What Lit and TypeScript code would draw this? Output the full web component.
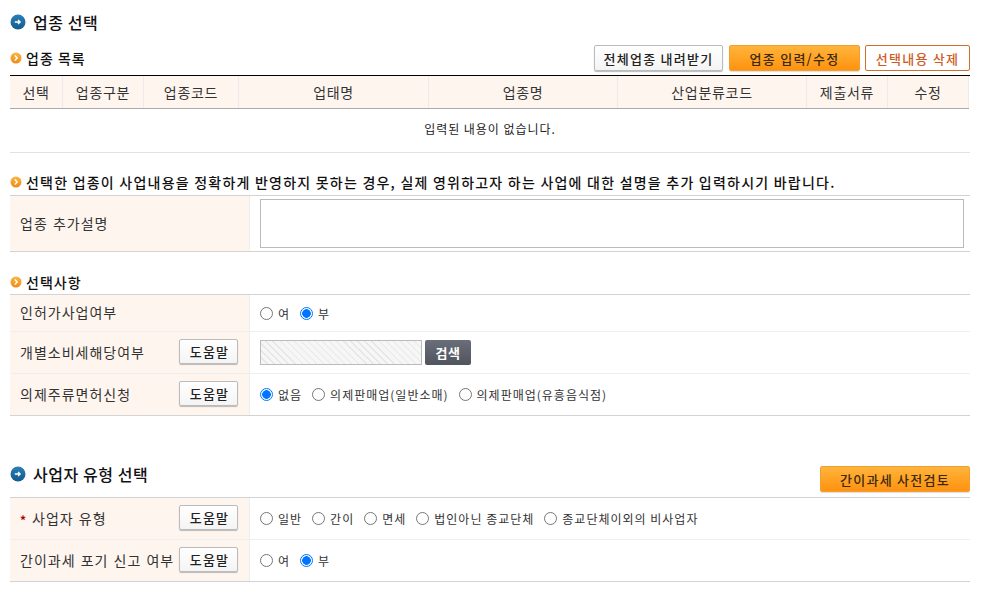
import { LitElement, html, css } from "lit";
import { customElement } from "lit/decorators.js";

const blueIcon = html`<svg class="ic16" viewBox="0 0 16 16"><defs><linearGradient id="bg" x1="0" y1="0" x2="0" y2="1"><stop offset="0" stop-color="#2a7fb8"/><stop offset="1" stop-color="#125a8e"/></linearGradient></defs><circle cx="8" cy="8" r="7.5" fill="url(#bg)"/><path d="M4.8 8h5.2M8 5.9 10.2 8 8 10.1" fill="none" stroke="#fff" stroke-width="1.3"/></svg>`;
const orangeIcon = html`<svg class="ic12" viewBox="0 0 12 12"><defs><linearGradient id="og" x1="0" y1="0" x2="0" y2="1"><stop offset="0" stop-color="#fbb545"/><stop offset="1" stop-color="#ef8a16"/></linearGradient></defs><circle cx="6" cy="6" r="5.5" fill="url(#og)"/><path d="M4.8 3.6 7.2 6 4.8 8.4" fill="none" stroke="#fff" stroke-width="1.4"/></svg>`;

const radio = (label: string, on = false) => html`<span class="radio"><span class="dot ${on ? "on" : ""}"></span><span>${label}</span></span>`;

@customElement("app-root")
export class AppRoot extends LitElement {
  static styles = css`
    :host { display: block; font-family: "Noto Sans CJK KR", "Noto Sans", sans-serif; color: #333; background: #fff; height: 600px; overflow: hidden; }
    .page { padding: 0 12px 0 10px; }
    .ic16 { width: 16px; height: 16px; flex: none; }
    .ic12 { width: 12px; height: 12px; flex: none; }
    .h1 { display: flex; align-items: center; gap: 7px; font-size: 16px; font-weight: 500; color: #111; letter-spacing: 0.55px; height: 22px; }
    .h2 { display: flex; align-items: center; gap: 4px; font-size: 14px; font-weight: 500; color: #111; letter-spacing: 1px; height: 20px; }
    .top { margin-top: 11px; }
    .bar { display: flex; align-items: center; justify-content: space-between; }
    .bar1 { margin-top: 12px; }
    .btns { display: flex; gap: 5px; }
    .btn { box-sizing: border-box; height: 26px; display: flex; align-items: center; justify-content: center; font-size: 13px; font-weight: 500; letter-spacing: 1.25px; border-radius: 2px; white-space: nowrap; }
    .white { border: 1px solid #bbb; background: linear-gradient(#fff, #f4f4f4); color: #222; box-shadow: 0 1px 1px #bbb; }
    .orange { border: 1px solid #f0a030; background: linear-gradient(#ffb43c, #ff920f); color: #3a2a10; box-shadow: 0 1px 1px #ddd; }
    .outline { border: 1px solid #d0702c; background: #fff; color: #cf5c22; }
    .w129 { width: 129px; margin-right: 1px; } .w131 { width: 131px; } .w105 { width: 105px; } .w150 { width: 150px; }
    .help { width: 59px; height: 25px; flex: none; padding-left: 2px; margin-bottom: 2px; }

    .list { margin-top: 4px; border-top: 1px solid #000; }
    .thead { display: grid; grid-template-columns: 53px 81px 95px 190px 189px 189px 81px 81px; height: 32px; border-bottom: 1px solid #aaa; box-sizing: content-box; background: #fff5ef; width: 959px; }
    .th { display: flex; align-items: center; justify-content: center; font-size: 14px; letter-spacing: 0.7px; color: #333; border-right: 1px solid #eceaea; }
    .empty { border-bottom: 1px solid #e2e2e2; display: flex; align-items: center; justify-content: center; padding-bottom: 5px; box-sizing: content-box; height: 38px; font-size: 12px; letter-spacing: 0.95px; color: #222; }

    .note { margin-top: 19px; letter-spacing: 1.22px; }
    .tbl { border-top: 1px solid #d3d3d3; border-bottom: 1px solid #d3d3d3; }
    .row { display: grid; grid-template-columns: 240px 1fr; }
    .row + .row { border-top: 1px solid #eee; }
    .lab { background: #fff5ef; border-right: 1px solid #eee; box-sizing: border-box; padding: 0 11px 0 10px; display: flex; align-items: center; justify-content: space-between; font-size: 14px; letter-spacing: 1px; word-spacing: 1px; color: #333; white-space: nowrap; }
    .val { display: flex; align-items: center; padding-left: 10px; gap: 10px; font-size: 12px; letter-spacing: 1px; color: #333; }
    .r36 { height: 36px; } .r41 { height: 41px; } .r56 { height: 55px; }
    .txa { box-sizing: border-box; width: 704px; height: 49px; border: 1px solid #bbb; background: #fff; }
    .radio { display: inline-flex; align-items: center; gap: 5px; }
    .dot { box-sizing: border-box; width: 13px; height: 13px; border-radius: 50%; border: 1px solid #767676; background: #fff; display: block; }
    .dot.on { border: 1.5px solid #0075ff; background: radial-gradient(circle, #0075ff 0 4px, #fff 4.6px); }
    .dis { box-sizing: border-box; width: 162px; height: 25px; border: 1px solid #bbb; background: repeating-linear-gradient(45deg, #f6f6f6 0 4px, #e6e6e6 4px 5px); }
    .search { width: 46px; height: 25px; box-sizing: border-box; border-radius: 2px; background: linear-gradient(#6a6e78, #50545e); color: #fff; font-size: 13px; font-weight: 700; letter-spacing: 0.5px; display: flex; align-items: center; justify-content: center; margin-left: -7px; }
    .star { position: relative; top: 2px; color: #b00000; font-weight: 700; margin-right: 6px; font-size: 12px; letter-spacing: 0; }
    .lab-l { display: flex; align-items: center; margin-bottom: 2px; }
    .h2gap { margin-top: 20px; }
    .sec2 { margin-top: 47px; height: 29px; }
    .sec2 .h1 { align-self: flex-start; }
    .sec2 .btn { align-self: flex-end; }
    .t2 { margin-top: 5px; }
    .t-opt { margin-top: 2px; }
    .t-note { margin-top: 3px; }
  `;

  render() {
    const heads = ["선택", "업종구분", "업종코드", "업태명", "업종명", "산업분류코드", "제출서류", "수정"];
    return html`<div class="page">
      <div class="h1 top">${blueIcon}<span>업종 선택</span></div>
      <div class="bar bar1">
        <div class="h2">${orangeIcon}<span>업종 목록</span></div>
        <div class="btns">
          <div class="btn white w129">전체업종 내려받기</div>
          <div class="btn orange w131">업종 입력/수정</div>
          <div class="btn outline w105">선택내용 삭제</div>
        </div>
      </div>
      <div class="list">
        <div class="thead">${heads.map((h) => html`<div class="th">${h}</div>`)}</div>
        <div class="empty"><span>입력된 내용이 없습니다.</span></div>
      </div>

      <div class="h2 note">${orangeIcon}<span>선택한 업종이 사업내용을 정확하게 반영하지 못하는 경우, 실제 영위하고자 하는 사업에 대한 설명을 추가 입력하시기 바랍니다.</span></div>
      <div class="tbl t-note">
        <div class="row r56"><div class="lab"><span class="lab-l">업종 추가설명</span></div><div class="val"><div class="txa"></div></div></div>
      </div>

      <div class="h2 h2gap">${orangeIcon}<span>선택사항</span></div>
      <div class="tbl t-opt">
        <div class="row r36"><div class="lab"><span class="lab-l">인허가사업여부</span></div><div class="val">${radio("여")}${radio("부", true)}</div></div>
        <div class="row r41"><div class="lab"><span class="lab-l">개별소비세해당여부</span><div class="btn white help">도움말</div></div><div class="val"><div class="dis"></div><div class="search">검색</div></div></div>
        <div class="row r41"><div class="lab"><span class="lab-l">의제주류면허신청</span><div class="btn white help">도움말</div></div><div class="val">${radio("없음", true)}${radio("의제판매업(일반소매)")}${radio("의제판매업(유흥음식점)")}</div></div>
      </div>

      <div class="bar sec2">
        <div class="h1">${blueIcon}<span>사업자 유형 선택</span></div>
        <div class="btn orange w150">간이과세 사전검토</div>
      </div>
      <div class="tbl t2">
        <div class="row r41"><div class="lab"><span class="lab-l"><span class="star">*</span>사업자 유형</span><div class="btn white help">도움말</div></div><div class="val">${radio("일반")}${radio("간이")}${radio("면세")}${radio("법인아닌 종교단체")}${radio("종교단체이외의 비사업자")}</div></div>
        <div class="row r41"><div class="lab"><span class="lab-l">간이과세 포기 신고 여부</span><div class="btn white help">도움말</div></div><div class="val">${radio("여")}${radio("부", true)}</div></div>
      </div>
    </div>`;
  }
}
